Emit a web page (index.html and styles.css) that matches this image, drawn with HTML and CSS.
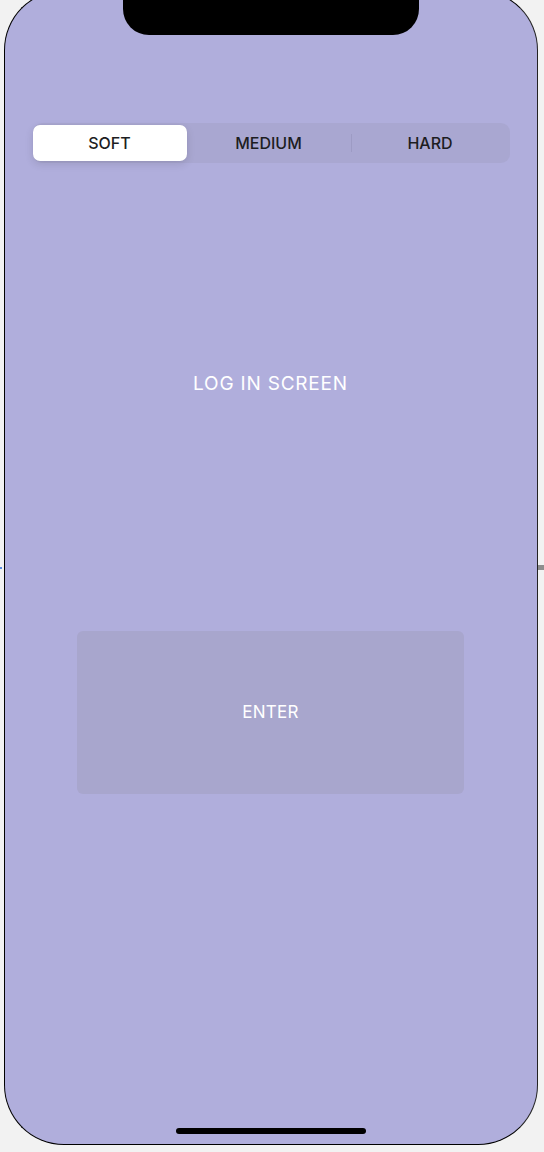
FILE: index.html
```html
<!DOCTYPE html>
<html lang="en">
<head>
<meta charset="utf-8">
<title>Log in screen</title>
<link rel="stylesheet" href="styles.css">
</head>
<body>
<div class="canvas">
  <div class="phone">
    <div class="notch"></div>
    <div class="screen">
      <div class="segmented">
        <div class="segment selected">SOFT</div>
        <div class="segment">MEDIUM</div>
        <div class="segment divided">HARD</div>
      </div>
      <div class="title">LOG IN SCREEN</div>
      <div class="enter">ENTER</div>
      <div class="home-indicator"></div>
    </div>
  </div>
  <div class="side-mark"></div>
  <div class="side-tick"></div>
</div>
</body>
</html>
```
FILE: styles.css
```css
* { box-sizing: border-box; }
html, body {
  margin: 0;
  padding: 0;
  background: #f2f2f2;
  overflow: hidden;
}
body {
  width: 544px;
  height: 1152px;
  font-family: Inter, "Noto Sans", "Liberation Sans", sans-serif;
}
.canvas {
  position: relative;
  display: flow-root;
  width: 544px;
  height: 1152px;
  padding-left: 4px;
}
.phone {
  position: relative;
  margin-top: -10px;
  width: 534px;
  height: 1155px;
  border: 1.5px solid #000;
  border-right-color: #222;
  border-radius: 60px;
  background: #b0aedc;
  overflow: hidden;
}
.notch {
  position: absolute;
  top: 0;
  left: 117.5px;
  width: 296px;
  height: 43.5px;
  background: #000;
  border-radius: 0 0 26px 26px;
}
.screen {
  height: 100%;
  display: flex;
  flex-direction: column;
  align-items: center;
  padding: 131.5px 28.5px 10px 27.5px;
}
.segmented {
  align-self: flex-start;
  width: 477px;
  height: 40px;
  display: grid;
  grid-template-columns: 154px 164px 1fr;
  padding: 2px 0;
  background: #a9a7d1;
  border-radius: 9px;
}
.segment {
  display: flex;
  align-items: center;
  justify-content: center;
  font-size: 16px;
  font-weight: 500;
  color: #1d1d22;
  position: relative;
}
.segment.selected {
  background: #fff;
  border-radius: 7px;
  box-shadow: 0 3px 8px rgba(0,0,0,0.12), 0 0 1px rgba(0,0,0,0.08);
}
.segment.divided::before {
  content: "";
  position: absolute;
  left: 0;
  top: 9px;
  bottom: 9px;
  width: 1px;
  background: #9d9bc4;
}
.title {
  margin-top: 210px;
  font-size: 19px;
  line-height: 22px;
  font-weight: 400;
  color: #fff;
  letter-spacing: 0.8px;
}
.enter {
  margin-top: 236px;
  width: 387px;
  height: 163px;
  border-radius: 6px;
  background: #a8a6cd;
  display: flex;
  align-items: center;
  justify-content: center;
  color: #fff;
  font-size: 17px;
  letter-spacing: 0.3px;
}
.home-indicator {
  margin-top: auto;
  width: 190px;
  height: 6px;
  border-radius: 3px;
  background: #000;
}
.side-mark {
  position: absolute;
  right: 0;
  top: 565px;
  width: 6px;
  height: 5px;
  background: #8e8e8e;
}
.side-tick {
  position: absolute;
  left: 0;
  top: 567px;
  width: 2px;
  height: 2px;
  background: #5b8de0;
}
```
